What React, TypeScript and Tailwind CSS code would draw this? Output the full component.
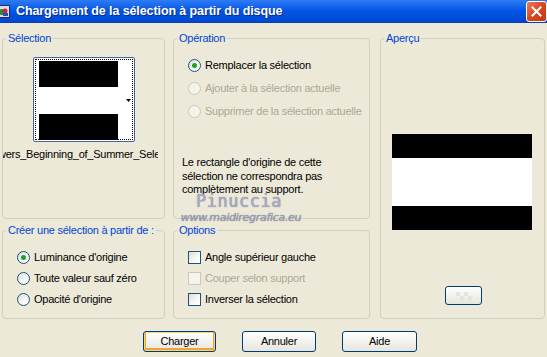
import React from 'react'

const FONT = "font-['Liberation_Sans',Arial,sans-serif]"

function Radio({ checked = false, disabled = false }: { checked?: boolean; disabled?: boolean }) {
  return (
    <span
      className={`w-[13px] h-[13px] rounded-full border flex items-center justify-center shrink-0 ${
        disabled
          ? 'border-[#CAC8BB] bg-[#F5F4EA]'
          : 'border-[#1C5180] bg-gradient-to-br from-[#DCDBD4] via-[#F4F4F0] to-white'
      }`}
    >
      {checked && <span className="w-[5px] h-[5px] rounded-full bg-[#21A121]" />}
    </span>
  )
}

function Check({ disabled = false }: { disabled?: boolean }) {
  return (
    <span
      className={`w-[13px] h-[13px] border shrink-0 ${
        disabled
          ? 'border-[#CAC8BB] bg-[#F5F4EA]'
          : 'border-[#1C5180] bg-gradient-to-br from-[#DCDBD4] via-[#F4F4F0] to-white'
      }`}
    />
  )
}

function Group({ title, className = '', children }: { title: string; className?: string; children?: React.ReactNode }) {
  return (
    <fieldset className={`min-w-0 border border-[#D0D0BF] rounded-[4px] ${className}`}>
      <legend className="ml-[3px] px-[2px] text-[11px] leading-[14px] whitespace-nowrap text-[#0046D5]">{title}</legend>
      {children}
    </fieldset>
  )
}

function Button({ label, isDefault = false }: { label: string; isDefault?: boolean }) {
  return (
    <button
      className={`w-full h-[21px] border border-[#003C74] rounded-[3px] bg-gradient-to-b from-white to-[#E6E5DD] text-[11px] text-black ${
        isDefault ? 'shadow-[inset_0_0_0_1px_#FBD37A,inset_0_-1px_0_2px_#F0A431]' : ''
      }`}
    >
      {label}
    </button>
  )
}

function Row({ children, muted = false }: { children: React.ReactNode; muted?: boolean }) {
  return (
    <div className={`flex items-center gap-[4px] leading-[13px] whitespace-nowrap ${muted ? 'text-[#ACA899]' : ''}`}>
      {children}
    </div>
  )
}

export default function App() {
  return (
    <div className={`relative w-[547px] h-[357px] overflow-hidden bg-[#ECE9D8] ${FONT} text-[11px] tracking-[-0.25px] text-black`}>
      {/* title bar */}
      <div className="h-[23px] flex items-center bg-gradient-to-b from-[#2E7BF5] via-[#0055E5] to-[#0047D0] border-b border-[#0A3FB0]">
        <svg width="12" height="13" viewBox="0 0 12 13" className="ml-[-2px] shrink-0">
          <rect x="0" y="0" width="12" height="13" fill="#2A2A6A" />
          <rect x="1" y="1" width="10" height="11" fill="#DDE" />
          <circle cx="4" cy="7" r="3" fill="#2B8A3A" />
          <circle cx="7" cy="6" r="2.5" fill="#C02A3A" />
          <rect x="5" y="8" width="5" height="3" fill="#2450B0" />
        </svg>
        <span className="ml-[6px] text-[12.5px] font-bold text-white tracking-[-0.1px] [text-shadow:1px_1px_0_#0A2E8C]">
          Chargement de la sélection à partir du disque
        </span>
        <span className="ml-auto mt-[1px] w-[21px] h-[21px] rounded-[3px] border border-white bg-gradient-to-br from-[#E8795C] via-[#D8481F] to-[#C2361A] flex items-center justify-center">
          <svg width="11" height="11" viewBox="0 0 11 11">
            <path d="M1.5 1.5 L9.5 9.5 M9.5 1.5 L1.5 9.5" stroke="white" strokeWidth="2" strokeLinecap="square" />
          </svg>
        </span>
      </div>

      {/* groups */}
      <div className="grid grid-cols-[171px_207px_165px] grid-rows-[188px_96px] gap-y-[4px] pl-[2px] pt-[8px]">
        <Group title="Sélection" className="mr-[8px] flex flex-col">
          <div className="ml-[30px] mt-[12px] w-[102px] h-[85px] border border-[#46649A] rounded-[2px] bg-white p-[1px]">
            <div className="relative w-full h-full border border-dotted border-black pl-[3px] pt-[1px]">
              <div className="w-[79px] flex flex-col">
                <div className="h-[26px] bg-black" />
                <div className="h-[27px] bg-white" />
                <div className="h-[26px] bg-black" />
              </div>
              <svg width="5" height="3" viewBox="0 0 5 3" className="absolute right-[1px] top-[39px]">
                <path d="M0 0 H5 L2.5 3 Z" fill="black" />
              </svg>
            </div>
          </div>
          <div className="mt-[5px] w-[155px] overflow-hidden whitespace-nowrap leading-[14px]">
            <span className="ml-[-5px]">wers_Beginning_of_Summer_Selection</span>
          </div>
        </Group>

        <Group title="Opération" className="mr-[10px] flex flex-col">
          <div className="mt-[14px] ml-[14px] flex flex-col gap-[10px]">
            <Row>
              <Radio checked />
              <span>Remplacer la sélection</span>
            </Row>
            <Row muted>
              <Radio disabled />
              <span>Ajouter à la sélection actuelle</span>
            </Row>
            <Row muted>
              <Radio disabled />
              <span>Supprimer de la sélection actuelle</span>
            </Row>
          </div>
          <p className="mt-[38px] ml-[8px] leading-[13.5px]">
            Le rectangle d'origine de cette
            <br />
            sélection ne correspondra pas
            <br />
            complètement au support.
          </p>
        </Group>

        <Group title="Aperçu" className="row-span-2 flex flex-col items-center">
          <div className="mt-[89px] ml-[-2px] w-[140px] flex flex-col">
            <div className="h-[24px] bg-black" />
            <div className="h-[48px] bg-white" />
            <div className="h-[24px] bg-black" />
          </div>
          <button className="mt-[56px] ml-[2px] w-[37px] h-[19px] border border-[#003C74] rounded-[3px] bg-gradient-to-b from-white to-[#E6E5DD] flex items-center justify-center">
            <svg width="16" height="8" viewBox="0 0 16 8">
              <rect x="0" y="0" width="4" height="4" fill="#E4E4E4" />
              <rect x="8" y="0" width="4" height="4" fill="#E4E4E4" />
              <rect x="4" y="4" width="4" height="4" fill="#E4E4E4" />
              <rect x="12" y="4" width="4" height="4" fill="#E4E4E4" />
            </svg>
          </button>
        </Group>

        <Group title="Créer une sélection à partir de :" className="mr-[8px]">
          <div className="mt-[14px] ml-[14px] flex flex-col gap-[8px]">
            <Row>
              <Radio checked />
              <span>Luminance d'origine</span>
            </Row>
            <Row>
              <Radio />
              <span>Toute valeur sauf zéro</span>
            </Row>
            <Row>
              <Radio />
              <span>Opacité d'origine</span>
            </Row>
          </div>
        </Group>

        <Group title="Options" className="mr-[10px]">
          <div className="mt-[14px] ml-[14px] flex flex-col gap-[8px]">
            <Row>
              <Check />
              <span>Angle supérieur gauche</span>
            </Row>
            <Row muted>
              <Check disabled />
              <span>Couper selon support</span>
            </Row>
            <Row>
              <Check />
              <span>Inverser la sélection</span>
            </Row>
          </div>
        </Group>
      </div>

      {/* buttons */}
      <div className="mt-[12px] pl-[143px] flex gap-[26px]">
        <div className="w-[73px] flex"><Button label="Charger" isDefault /></div>
        <div className="w-[74px] flex"><Button label="Annuler" /></div>
        <div className="w-[75px] flex"><Button label="Aide" /></div>
      </div>

      {/* watermark */}
      <div className="absolute left-[180px] top-[193px] w-[122px] flex flex-col items-center pointer-events-none select-none">
        <span className="ml-[-4px] text-[17px] leading-[17px] tracking-[0.5px] font-['DejaVu_Sans_Mono',monospace] text-[#A7ABC6] [text-shadow:0_0_1px_#6F7390]">
          Pinuccia
        </span>
        <span className="mt-[1px] text-[11px] leading-[13px] tracking-[-0.3px] italic font-['DejaVu_Sans',sans-serif] text-[#9A9EB4] [text-shadow:0_0_1px_#777A90]">
          www.maidiregrafica.eu
        </span>
      </div>
    </div>
  )
}
